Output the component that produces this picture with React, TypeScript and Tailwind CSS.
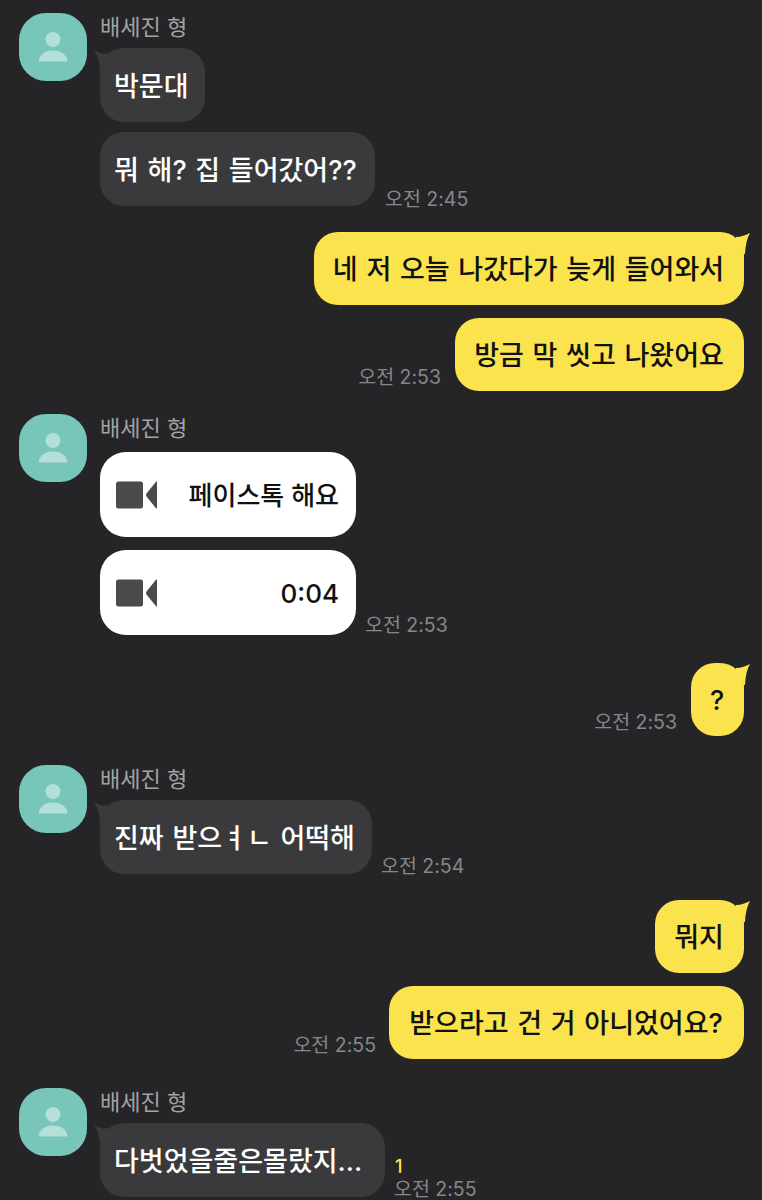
const font = { fontFamily: 'Inter, "Noto Sans CJK KR", "Noto Sans", sans-serif' };

function Avatar() {
  return (
    <div className="w-[68px] h-[68px] rounded-[27px] bg-[#78c5b9] shrink-0 flex items-center justify-center">
      <svg width="30" height="30" viewBox="0 0 30 30" fill="#b4e0d8">
        <circle cx="15" cy="7.5" r="7.5" />
        <path d="M0.6 29.5C0.6 23 7 18.5 15 18.5S29.4 23 29.4 29.5Z" />
      </svg>
    </div>
  );
}

function Time({ children, className }: { children: string; className?: string }) {
  return (
    <span className={`text-[19.5px] leading-[22px] text-[#87878a] whitespace-nowrap ${className ?? ''}`}>
      {children}
    </span>
  );
}

function LeftTail() {
  return (
    <svg className="absolute left-[-6px] top-[2px]" width="24" height="22" viewBox="0 0 24 22" fill="#3a3a3c">
      <path d="M0 0C3 1 6 3.5 11 3.5L20 3V22H6C6 14 4 6 0 0Z" />
    </svg>
  );
}

function RightTail() {
  return (
    <svg className="absolute right-[-6px] top-0" width="24" height="22" viewBox="0 0 24 22" fill="#fae34c">
      <path d="M10 5C15 5 20 3 24 1C21 6 19.5 13 19 22H4Z" />
    </svg>
  );
}

function Gray({ text, tail, width }: { text: string; tail?: boolean; width: string }) {
  return (
    <div className={`relative h-[74px] rounded-[24px] bg-[#3a3a3c] flex items-center pl-[14px] pt-[5px] text-white text-[27px] font-medium whitespace-nowrap [word-spacing:1.5px] ${width}`}>
      {tail && <LeftTail />}
      <span className="relative">{text}</span>
    </div>
  );
}

function Yellow({ text, tail, width }: { text: string; tail?: boolean; width: string }) {
  return (
    <div className={`relative h-[73px] rounded-[24px] bg-[#fae34c] flex items-center justify-center pt-[3px] pr-[1px] text-[#111] text-[27px] font-medium whitespace-nowrap [word-spacing:1.5px] ${width}`}>
      {tail && <RightTail />}
      <span className="relative">{text}</span>
    </div>
  );
}

function VideoIcon() {
  return (
    <svg width="42" height="28" viewBox="0 0 42 28" fill="#4b4b4d">
      <rect x="0" y="0.5" width="27" height="27" rx="2.5" />
      <path d="M41 1V27C41 27.6 40.5 27.6 40 27.2L30.5 15.5C29.8 14.6 29.8 13.4 30.5 12.5L40 0.8C40.5 0.4 41 0.4 41 1Z" />
    </svg>
  );
}

function CallCard({ text }: { text: string }) {
  return (
    <div className="w-[256px] h-[85px] rounded-[26px] bg-white flex items-center justify-between pl-[16px] pr-[17px] text-[#111] text-[26px] font-medium">
      <VideoIcon />
      <span className="mt-[2px]">{text}</span>
    </div>
  );
}

function Name({ className }: { className?: string }) {
  return <div className={`text-[22px] leading-[28px] text-[#a3a3a5] ${className ?? 'h-[35px]'}`}>배세진 형</div>;
}

export default function App() {
  return (
    <div className="w-[762px] h-[1200px] overflow-hidden bg-[#252527] pt-[13px]" style={font}>
      {/* first incoming group */}
      <div className="flex pl-[19px] gap-[13px]">
        <Avatar />
        <div>
          <Name />
          <Gray text="박문대" tail width="w-[105px]" />
          <div className="flex items-end gap-[10px] mt-[10px]">
            <Gray text="뭐 해? 집 들어갔어??" width="w-[275px]" />
            <Time className="mb-[-4px]">오전 2:45</Time>
          </div>
        </div>
      </div>

      {/* my replies */}
      <div className="flex flex-col items-end pr-[18px] mt-[26px]">
        <Yellow text="네 저 오늘 나갔다가 늦게 들어와서" tail width="w-[430px]" />
        <div className="flex items-end gap-[14px] mt-[13px]">
          <Time className="mb-[3px]">오전 2:53</Time>
          <Yellow text="방금 막 씻고 나왔어요" width="w-[289px]" />
        </div>
      </div>

      {/* face talk */}
      <div className="flex pl-[19px] gap-[13px] mt-[23px]">
        <Avatar />
        <div>
          <Name className="h-[38px]" />
          <CallCard text="페이스톡 해요" />
          <div className="flex items-end gap-[9px] mt-[13px]">
            <CallCard text="0:04" />
            <Time className="mb-[-1px]">오전 2:53</Time>
          </div>
        </div>
      </div>

      <div className="flex justify-end items-end gap-[14px] pr-[18px] mt-[28px]">
        <Time className="mb-[3px]">오전 2:53</Time>
        <Yellow text="?" tail width="w-[53px]" />
      </div>

      <div className="flex pl-[19px] gap-[13px] mt-[29px]">
        <Avatar />
        <div>
          <Name />
          <div className="flex items-end gap-[9px]">
            <Gray text="진짜 받으ㅕㄴ 어떡해" tail width="w-[272px]" />
            <Time className="mb-[-3px]">오전 2:54</Time>
          </div>
        </div>
      </div>

      <div className="flex flex-col items-end pr-[18px] mt-[26px]">
        <Yellow text="뭐지" tail width="w-[89px]" />
        <div className="flex items-end gap-[13px] mt-[13px]">
          <Time className="mb-[3px]">오전 2:55</Time>
          <Yellow text="받으라고 건 거 아니었어요?" width="w-[355px]" />
        </div>
      </div>

      <div className="flex pl-[19px] gap-[13px] mt-[29px]">
        <Avatar />
        <div>
          <Name />
          <div className="flex items-end gap-[9px]">
            <Gray text="다벗었을줄은몰랐지..." tail width="w-[285px]" />
            <div className="flex flex-col mb-[-3px]">
              <span className="text-[18px] leading-[18px] font-medium text-[#fae34c] pl-[1px] mb-[2px]">1</span>
              <Time>오전 2:55</Time>
            </div>
          </div>
        </div>
      </div>
    </div>
  );
}
